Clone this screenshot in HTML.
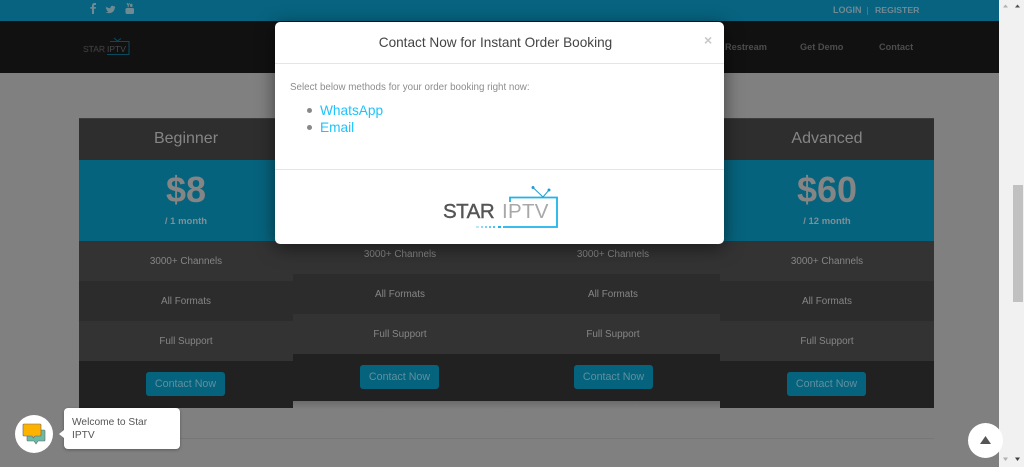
<!DOCTYPE html>
<html><head><meta charset="utf-8"><style>
*{box-sizing:border-box}
html,body{margin:0;padding:0;width:1024px;height:467px;overflow:hidden;background:#808080;font-family:"Liberation Sans",sans-serif}
.a{position:absolute}
.t{position:absolute;text-align:center;white-space:nowrap}
.card{position:absolute;width:214px;background:#212121}
.cap{position:absolute;left:0;top:0;width:100%;height:42px;background:#2e2e2e;border-top:1px solid #3c3c3c;text-align:center;font-size:16px;line-height:40px;color:#858585}
.band{position:absolute;left:0;top:42px;width:100%;height:81px;background:#06637d}
.price{position:absolute;left:0;top:52px;width:100%;text-align:center;font-size:36px;font-weight:bold;line-height:40px;color:#858585}
.per{position:absolute;left:0;top:98px;width:100%;text-align:center;font-size:9.5px;font-weight:bold;line-height:12px;color:#7f8f95}
.row{position:absolute;left:0;width:100%;height:40px;line-height:41px;text-align:center;font-size:9.9px;color:#868686}
.btn{position:absolute;width:79px;height:24px;line-height:24px;background:#06637d;border-radius:3px;color:#5f8f9e;font-size:10.7px;text-align:center}
.nav{position:absolute;top:41px;font-size:9.2px;font-weight:bold;color:#4d4d4d;line-height:12px;white-space:nowrap}
</style></head><body>
<div class="a" style="left:0;top:0;width:999px;height:21px;background:#07637f"></div>
<div class="a" style="left:0;top:21px;width:999px;height:52px;background:#111"></div>
<div class="a" style="left:999px;top:0;width:25px;height:467px;background:#f1f1f1"></div>
<div class="a" style="left:1013px;top:185px;width:10px;height:117px;background:#c1c1c1"></div>
<svg class="a" style="left:999px;top:1px" width="25" height="8"><path d="M4 6.5L6.5 3.5L9 6.5Z" fill="#b0b0b0"/><path d="M16 6.5L18.5 3.5L21 6.5Z" fill="#505050"/></svg>
<svg class="a" style="left:999px;top:456px" width="25" height="8"><path d="M4 1.5L6.5 5L9 1.5Z" fill="#b0b0b0"/><path d="M16 1.5L18.5 5L21 1.5Z" fill="#404040"/></svg>

<svg class="a" style="left:88px;top:2px" width="50" height="13" viewBox="0 0 50 13"><path d="M4 12V6.8H2.4V5H4V3.6C4 2 4.9 1 6.5 1H8V3H7C6.3 3 6 3.3 6 4V5H8L7.7 6.8H6V12Z" fill="#6f8a93"/><path transform="translate(3.6 1.2) scale(.8)" d="M18 4.5c2 1.2 4 1.8 5.5 1.8-.3-2 1.5-3.5 3.2-3 .6.1 1 .5 1.3.8l1.5-.6-.8 1.4 1.2-.2-1 1.2c.1 3.5-3 7-7.5 6.5-1.5 0-2.8-.5-3.9-1.2 1.3.1 2.6-.2 3.6-1-1.2-.1-2.1-.8-2.4-1.8h1.1c-1.2-.4-2-1.4-2-2.6l1.1.3c-1.1-.8-1.4-1.9-.9-2.6z" fill="#6f8a93"/><rect x="37.5" y="6" width="8.5" height="6" rx="1.5" fill="#6f8a93"/><path d="M39 1L40.2 3.5V5.3M41.5 1L40.3 3.5" stroke="#6f8a93" fill="none"/><rect x="42" y="1.8" width="2.5" height="3.2" rx="1" fill="#6f8a93"/></svg>

<div class="t" style="left:833px;top:5px;font-size:9px;font-weight:bold;color:#708a94;line-height:11px">LOGIN</div>
<div class="a" style="left:867px;top:7px;width:1px;height:8px;background:#3d7d90"></div>
<div class="t" style="left:875px;top:5px;font-size:8.7px;font-weight:bold;color:#708a94;line-height:11px">REGISTER</div>
<div class="nav" style="left:725px">Restream</div>
<div class="nav" style="left:800px">Get Demo</div>
<div class="nav" style="left:879px">Contact</div>

<div class="t" style="left:83px;top:44px;font-size:8.5px;color:#3c3c3c;line-height:11px;-webkit-text-stroke:.2px #3c3c3c">STAR</div>
<div class="t" style="left:107px;top:44px;font-size:8.5px;color:#4a4a4a;line-height:11px">IPTV</div>
<svg class="a" style="left:96px;top:36px" width="36" height="22"><path d="M14 5.5H33V18.5H11" fill="none" stroke="#0a4a5e"/><path d="M18 2L21.5 5L25 2.5" fill="none" stroke="#0a4a5e"/></svg>

<!-- cards -->
<div class="a" style="left:293px;top:401px;width:427px;height:8px;background:linear-gradient(#6b6b6b,#808080)"></div>
<div class="card" style="left:293px;top:118px;height:283px">
<div class="row" style="top:116px;background:#333">3000+ Channels</div>
<div class="row" style="top:156px;background:#2c2c2c">All Formats</div>
<div class="row" style="top:196px;background:#333">Full Support</div>
<div class="btn" style="left:67px;top:247px">Contact Now</div>
</div>
<div class="card" style="left:506px;top:118px;height:283px">
<div class="row" style="top:116px;background:#333">3000+ Channels</div>
<div class="row" style="top:156px;background:#2c2c2c">All Formats</div>
<div class="row" style="top:196px;background:#333">Full Support</div>
<div class="btn" style="left:68px;top:247px">Contact Now</div>
</div>
<div class="card" style="left:79px;top:118px;height:290px">
<div class="cap">Beginner</div>
<div class="band"></div>
<div class="price">$8</div>
<div class="per">/ 1 month</div>
<div class="row" style="top:123px;background:#333">3000+ Channels</div>
<div class="row" style="top:163px;background:#2c2c2c">All Formats</div>
<div class="row" style="top:203px;background:#333">Full Support</div>
<div class="btn" style="left:67px;top:254px">Contact Now</div>
</div>
<div class="card" style="left:720px;top:118px;height:290px">
<div class="cap">Advanced</div>
<div class="band"></div>
<div class="price">$60</div>
<div class="per">/ 12 month</div>
<div class="row" style="top:123px;background:#333">3000+ Channels</div>
<div class="row" style="top:163px;background:#2c2c2c">All Formats</div>
<div class="row" style="top:203px;background:#333">Full Support</div>
<div class="btn" style="left:67px;top:254px">Contact Now</div>
</div>
<div class="a" style="left:79px;top:438px;width:855px;height:1px;background:#777"></div>

<!-- modal -->
<div class="a" style="left:275px;top:22px;width:449px;height:222px;background:#fff;border-radius:5px;box-shadow:0 4px 18px rgba(0,0,0,.5)">
<div class="a" style="left:0;top:0;width:441px;height:42px;text-align:center;font-size:13.6px;line-height:41px;color:#444">Contact Now for Instant Order Booking</div>
<div class="a" style="left:0;top:41px;width:100%;height:1px;background:#e5e5e5"></div>
<div class="a" style="left:429px;top:11px;font-size:14px;font-weight:bold;line-height:14px;color:#c8c8c8">×</div>
<div class="a" style="left:15px;top:59px;font-size:9.8px;line-height:13px;color:#8d8d8d;white-space:nowrap">Select below methods for your order booking right now:</div>
<div class="a" style="left:32px;top:86px;width:5px;height:5px;border-radius:50%;background:#888"></div>
<div class="a" style="left:45px;top:80px;font-size:13.7px;line-height:17px;color:#1fc3fb">WhatsApp</div>
<div class="a" style="left:32px;top:103px;width:5px;height:5px;border-radius:50%;background:#888"></div>
<div class="a" style="left:45px;top:97px;font-size:13.7px;line-height:17px;color:#1fc3fb">Email</div>
<div class="a" style="left:0;top:147px;width:100%;height:1px;background:#e5e5e5"></div>
<div class="a" style="left:168px;top:178px;font-size:20.5px;line-height:24px;color:#555;letter-spacing:-.5px;white-space:nowrap;-webkit-text-stroke:.4px #555">STAR</div>
<div class="a" style="left:227px;top:178px;font-size:20.5px;line-height:24px;color:#a8a8a8;letter-spacing:.3px;white-space:nowrap">IPTV</div>
<svg class="a" style="left:195px;top:160px" width="95" height="50"><path d="M40 20V15.5H87V45H33" fill="none" stroke="#1fb3ea" stroke-width="1.8"/><path d="M63 5.5L73 15L79 8" fill="none" stroke="#1f9fd0"/><circle cx="63" cy="5.5" r="1.5" fill="#1f9fd0"/><circle cx="79" cy="8" r="1.5" fill="#1f9fd0"/><g fill="#1fb3ea"><rect x="6" y="44" width="3" height="2" opacity=".3"/><rect x="11" y="44" width="2" height="2" opacity=".5"/><rect x="15" y="44" width="2" height="2" opacity=".6"/><rect x="19" y="44" width="2" height="2" opacity=".7"/><rect x="23" y="44" width="2" height="2" opacity=".8"/><rect x="28" y="44" width="3" height="2"/></g></svg>
</div>

<!-- chat -->
<div class="a" style="left:15px;top:415px;width:38px;height:38px;border-radius:50%;background:#fff"></div>
<svg class="a" style="left:20px;top:421px" width="28" height="26"><path d="M7 9H24Q25 9 25 10V19Q25 20 24 20H18L16 23L14 20H8Q7 20 7 19Z" fill="#6cbaa4" stroke="#666" stroke-width=".6"/><path d="M4 3H20Q21 3 21 4V14Q21 15 20 15H15L13.5 17L12 15H4Q3 15 3 14V4Q3 3 4 3Z" fill="#fdb200" stroke="#666" stroke-width=".6"/></svg>
<div class="a" style="left:64px;top:408px;width:116px;height:41px;background:#fff;border-radius:4px;box-shadow:0 1px 3px rgba(0,0,0,.3);font-size:10.2px;line-height:13px;color:#555;padding:8px 8px 0 8px">Welcome to Star IPTV</div>
<div class="a" style="left:59px;top:430px;width:0;height:0;border:4px solid transparent;border-right:5px solid #fff;border-left:0"></div>

<!-- top button -->
<div class="a" style="left:968px;top:423px;width:35px;height:35px;border-radius:50%;background:#fff"></div>
<svg class="a" style="left:979px;top:434px" width="13" height="12"><path d="M6.5 2L12 10H1Z" fill="#555"/></svg>
</body></html>
